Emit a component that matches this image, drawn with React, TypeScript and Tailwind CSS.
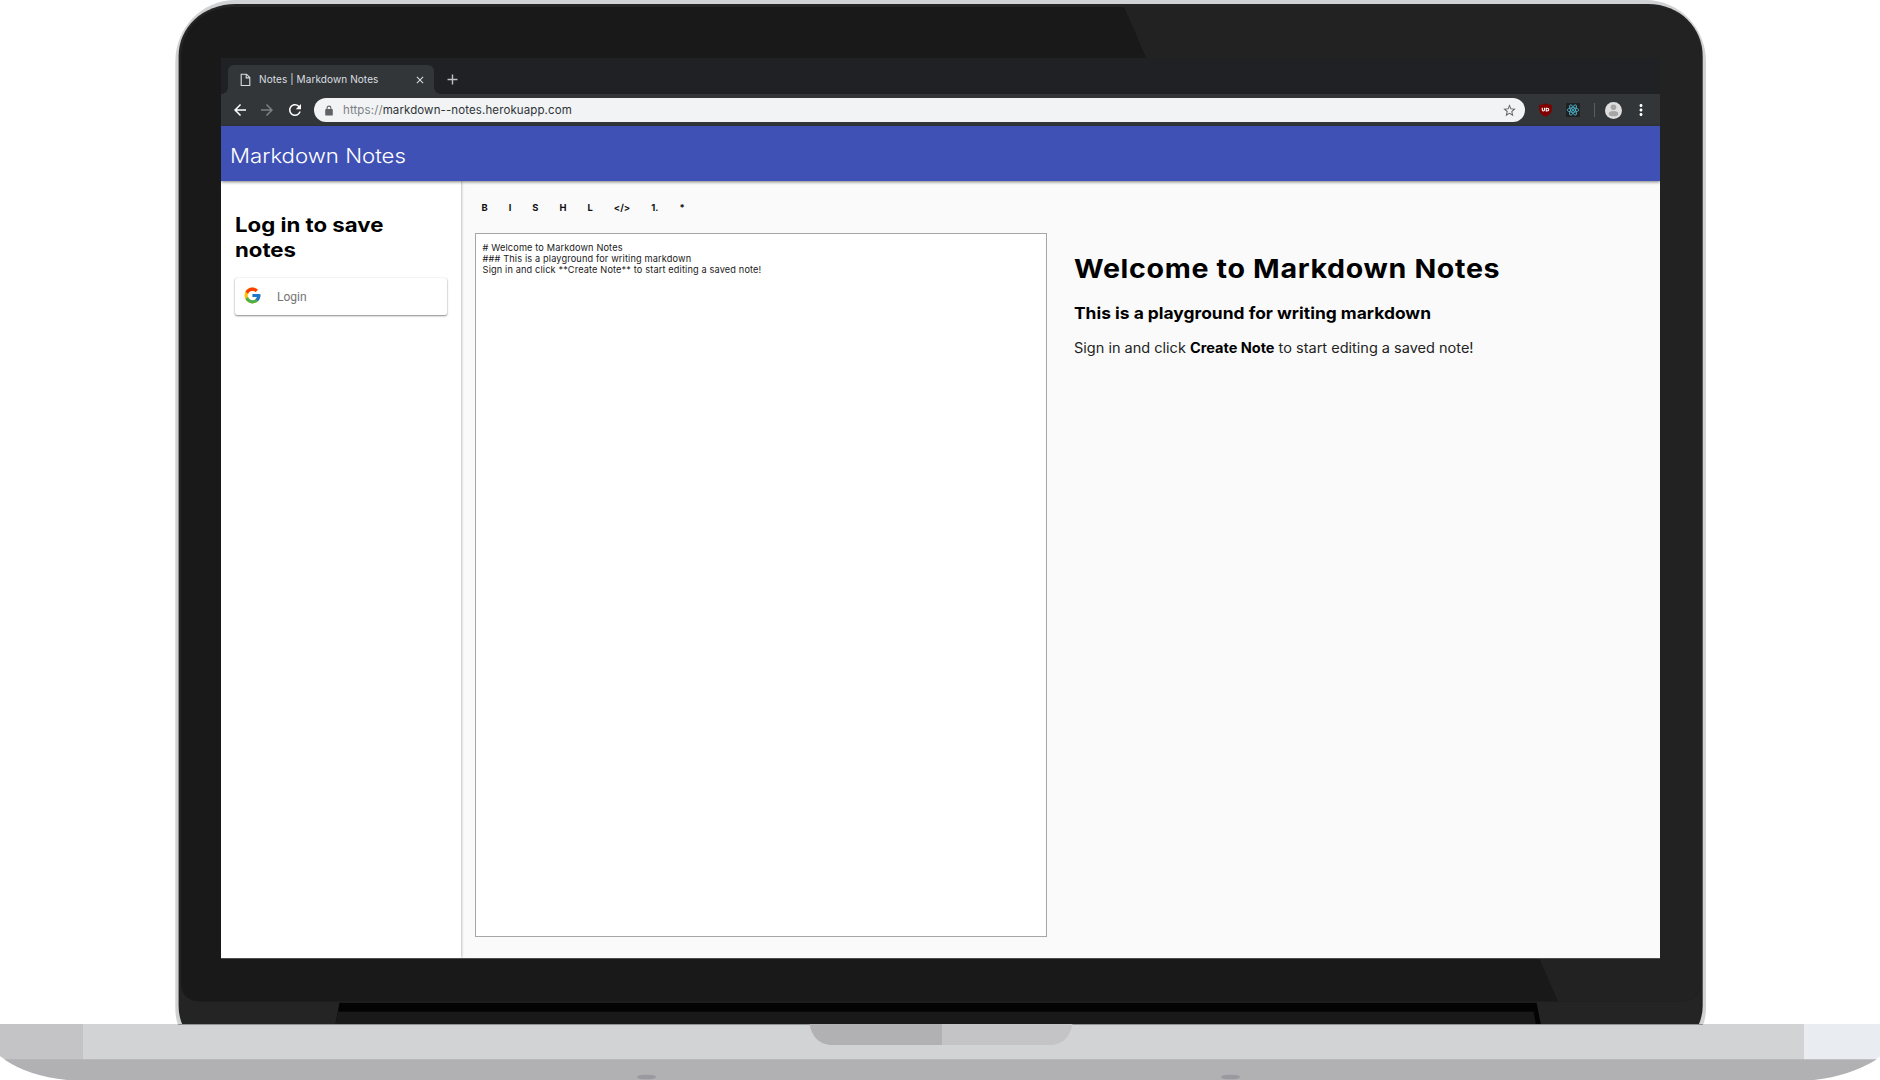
import type { ReactNode } from "react";
import { FcGoogle } from "react-icons/fc";
import {
  MdAdd,
  MdArrowBack,
  MdArrowForward,
  MdClose,
  MdMoreVert,
  MdRefresh,
  MdStarBorder,
} from "react-icons/md";

/* Laptop body: lid, bezel, hinge and base. */
function LaptopDrawing() {
  return (
    <svg className="absolute inset-0" width="1880" height="1080" viewBox="0 0 1880 1080" aria-hidden="true">
      <path d="M178 1025Q175.300 1018 175.300 1008V62C175.300 28 201 0 236 0H1645C1680 0 1706 28 1706 62V1008Q1706 1018 1703 1025Z" fill="#d1d2d4" />
      <path d="M182.500 1025Q178.600 1016 178.600 1006V56C178.600 28 202 4 236 4H1648C1680 4 1702.700 28 1702.700 56V1006Q1702.700 1016 1698.500 1025Z" fill="#242424" />
      <path d="M181 58C181 28 204 7 234 7H1648C1678 7 1700 28 1700 58V982Q1700 1001.500 1680 1001.500H201Q181 1001.500 181 982Z" fill="#191919" />
      <path d="M1124 7H1648C1678 7 1700 28 1700 58V982Q1700 1001.500 1680 1001.500H1558Z" fill="#222222" />
      <path d="M339.500 1002.700H1536.500L1541 1025H335.500Z" fill="#040404" />
      <path d="M338 1011.700H1533.500L1536 1025H335Z" fill="#191919" />
      <rect x="221" y="958" width="1439" height="1" fill="#4d4d4d" />

      <path d="M0 1024H1880V1056L1874 1060H6L0 1056Z" fill="#d2d3d5" />
      <path d="M0 1024H83V1060H6L0 1056Z" fill="#c4c4c6" />
      <path d="M1804 1024H1880V1056L1874 1060H1804Z" fill="#e9ecf1" />
      <path d="M4 1059.300H1877Q1850 1076 1814 1080H67Q28 1076 4 1059.300Z" fill="#b1b1b4" />
      <rect x="178" y="1024" width="1525" height="1" fill="#909193" />
      <path d="M809.500 1024H942V1045H830Q813 1043 809.500 1024Z" fill="#b1b1b4" />
      <path d="M942 1024H1072.500Q1069 1043 1052 1045H942Z" fill="#c4c4c6" />
      <ellipse cx="646.500" cy="1077" rx="9.500" ry="2.300" fill="#99999f" />
      <ellipse cx="1230.500" cy="1077" rx="9.500" ry="2.300" fill="#99999f" />
    </svg>
  );
}

/* Widened line of text, scaled from its left edge. */
function Wide({ className, children }: { className: string; children: ReactNode }) {
  return <span className={`block w-max origin-left whitespace-nowrap ${className}`}>{children}</span>;
}

function TabStrip() {
  return (
    <div className="flex h-9 shrink-0 items-end bg-[#202124] pl-[7px]">
      <div className="relative flex h-[29px] w-[206px] items-center rounded-t-[6px] bg-[#323639] pr-[8px] pl-[12px] text-[#dcdee1]">
        <span className="absolute bottom-0 -left-[6px] size-[6px] bg-[radial-gradient(circle_at_0_0,transparent_5.500px,#323639_6px)]" />
        <span className="absolute -right-[6px] bottom-0 size-[6px] bg-[radial-gradient(circle_at_100%_0,transparent_5.500px,#323639_6px)]" />
        <svg className="mr-[8px] shrink-0" width="11" height="14" viewBox="0 0 11 14" fill="none" stroke="currentColor" strokeWidth="1.100">
          <path d="M1.200 1.200H6.500L9.800 4.500V12.500H1.200Z" />
          <path d="M6.200 1.400V4.900H9.700" />
        </svg>
        <span className="flex-1 text-[10px] tracking-[0.1px] whitespace-nowrap">Notes | Markdown Notes</span>
        <MdClose size={12} />
      </div>
      <div className="ml-[10px] flex h-[29px] items-center text-[#bdc1c6]">
        <MdAdd size={17} />
      </div>
    </div>
  );
}

function LockIcon() {
  return (
    <svg className="ml-[2px] shrink-0" width="8" height="11" viewBox="0 0 8 11">
      <path d="M2.100 5V2.900Q2.100 1.100 4 1.100Q5.900 1.100 5.900 2.900V5" fill="none" stroke="currentColor" strokeWidth="1.100" />
      <rect x="0.200" y="4" width="7.600" height="6.600" rx="0.900" fill="currentColor" />
    </svg>
  );
}

function UblockIcon() {
  return (
    <svg className="ml-[14px] shrink-0" width="13" height="14" viewBox="0 0 13 14">
      <path d="M6.500 0.300C8.300 1.400 10.500 1.900 12.800 1.800V6.500C12.800 10 10 12.200 6.500 13.700C3 12.200 0.200 10 0.200 6.500V1.800C2.500 1.900 4.700 1.400 6.500 0.300Z" fill="#800000" />
      <path d="M3.300 4.700V6.800Q3.300 8 4.400 8Q5.500 8 5.500 6.800V4.700M7.200 5.200V8H8Q9.800 8 9.800 6.600Q9.800 5.200 8 5.200Z" fill="none" stroke="#fff" strokeWidth="1.100" />
    </svg>
  );
}

function ReactDevIcon() {
  return (
    <svg className="ml-[14px] shrink-0" width="14" height="14" viewBox="0 0 14 14">
      <rect width="14" height="14" rx="0.800" fill="#202020" />
      <g fill="none" stroke="#4fb4cf" strokeWidth="0.850">
        <ellipse cx="7" cy="7" rx="5.800" ry="2.200" />
        <ellipse cx="7" cy="7" rx="5.800" ry="2.200" transform="rotate(60 7 7)" />
        <ellipse cx="7" cy="7" rx="5.800" ry="2.200" transform="rotate(120 7 7)" />
      </g>
      <circle cx="7" cy="7" r="1.100" fill="#4fb4cf" />
    </svg>
  );
}

function AddressBar() {
  return (
    <div className="flex h-8 shrink-0 items-center bg-[#323639] pl-[10px] text-white">
      <MdArrowBack className="shrink-0" size={18} />
      <MdArrowForward className="ml-[9px] shrink-0 text-[#7d8083]" size={18} />
      <MdRefresh className="ml-[10px] shrink-0" size={18} />
      <div className="ml-[10px] flex h-6 w-[1211px] shrink-0 items-center rounded-full bg-[#f1f3f4] pr-[8px] pl-[9px] text-[#5f6368]">
        <LockIcon />
        <span className="ml-[10px] flex-1 pt-px text-[11.500px] tracking-[0.11px] text-[#7d8185]">
          https://<span className="text-[#303337]">markdown--notes.herokuapp.com</span>
        </span>
        <MdStarBorder size={15} />
      </div>
      <UblockIcon />
      <ReactDevIcon />
      <span className="ml-[14px] h-[14px] w-px shrink-0 bg-[#5b5f62]" />
      <svg className="ml-[10px] shrink-0" width="17" height="17" viewBox="0 0 17 17">
        <circle cx="8.500" cy="8.500" r="8.500" fill="#dedede" />
        <circle cx="8.500" cy="5.200" r="2.800" fill="#a6a6a6" />
        <ellipse cx="8.500" cy="11.700" rx="4.800" ry="2.600" fill="#a6a6a6" />
      </svg>
      <MdMoreVert className="ml-[10px] shrink-0" size={18} />
    </div>
  );
}

function Sidebar() {
  return (
    <aside className="relative w-[240px] shrink-0 bg-white pt-[32px] pl-[14px] shadow-[0_0_3px_rgba(0,0,0,0.4)]">
      <h2 className="text-[20px] leading-[24.500px] font-bold text-black">
        <Wide className="scale-x-[1.11]">Log in to save</Wide>
        <Wide className="scale-x-[1.11]">notes</Wide>
      </h2>
      <button className="mt-4 flex h-[37px] w-[212px] items-center rounded-[2px] bg-white pl-[7.500px] shadow-[0_1px_2px_rgba(0,0,0,0.45),0_0_1px_rgba(0,0,0,0.2)]">
        <FcGoogle className="-mt-[3px]" size={19} />
        <span className="ml-[15.500px] font-[Roboto] text-[12px] text-[#757575]">Login</span>
      </button>
    </aside>
  );
}

const tools = ["B", "I", "S", "H", "L", "</>", "1.", "*"];

function Editor() {
  return (
    <section className="flex w-[585px] shrink-0 flex-col pl-[13px]">
      <div className="flex h-[52px] shrink-0 items-center gap-[21px] pt-[2px] pl-[7.500px] text-[9.400px] font-bold text-[#111]">
        {tools.map((t) => (
          <button key={t}>{t}</button>
        ))}
      </div>
      <div className="ml-[0.600px] h-[704px] w-[572.400px] border border-[#a6a6a6] bg-white pt-[7.500px] pl-[7px] text-[9.200px] leading-[11.200px] tracking-[0.14px] whitespace-pre text-[#1a1a1a]">
        {"# Welcome to Markdown Notes\n### This is a playground for writing markdown\nSign in and click **Create Note** to start editing a saved note!"}
      </div>
    </section>
  );
}

function Preview() {
  return (
    <section className="flex-1 pt-[72px] pl-[27.500px] text-black">
      <h1 className="text-[26px] leading-[32px] font-bold">
        <Wide className="scale-x-[1.1] tracking-[0.6px]">Welcome to Markdown Notes</Wide>
      </h1>
      <h3 className="mt-[18px] text-[16.500px] leading-[20px] font-bold">
        <Wide className="scale-x-[1.055]">This is a playground for writing markdown</Wide>
      </h3>
      <p className="mt-[15px] text-[14px] leading-[20px] text-[#222]">
        <Wide className="scale-x-[1.037]">
          Sign in and click <strong className="text-black">Create Note</strong> to start editing a saved note!
        </Wide>
      </p>
    </section>
  );
}

export default function App() {
  return (
    <div className="relative h-[1080px] w-[1880px] overflow-hidden bg-white pt-[58px] pl-[221px] font-[Inter,sans-serif]">
      <LaptopDrawing />
      <div className="relative flex h-[900px] w-[1439px] flex-col overflow-hidden bg-[#fafafa]">
        <TabStrip />
        <AddressBar />
        <header className="relative z-10 flex h-[55px] shrink-0 items-center bg-[#3f51b5] pt-[5px] pl-[9px] text-[20px] font-light text-white shadow-[0_1px_3px_rgba(0,0,0,0.5)]">
          <Wide className="scale-x-[1.11]">Markdown Notes</Wide>
        </header>
        <main className="flex min-h-0 flex-1">
          <Sidebar />
          <Editor />
          <Preview />
        </main>
      </div>
    </div>
  );
}
